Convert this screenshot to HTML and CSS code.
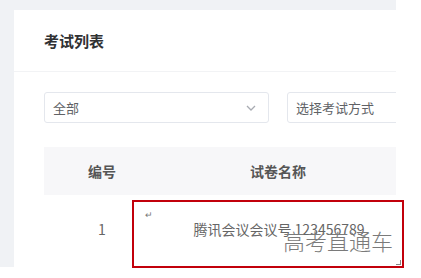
FILE: index.html
```html
<!DOCTYPE html>
<html lang="zh-CN">

<head>
  <meta charset="UTF-8">
  <meta name="viewport" content="width=device-width, initial-scale=1.0">
  <title>考试列表</title>
  <link rel="stylesheet" href="styles.css">
</head>

<body>
  <div class="frame">
    <div class="card">
      <div class="card-header">考试列表</div>
      <div class="card-body">
        <div class="filters">
          <div class="select select-status">
            <span>全部</span>
            <svg class="arrow" width="10" height="6" viewBox="0 0 10 6">
              <path d="M1 1 L5 5 L9 1" fill="none" stroke="#a8abb2" stroke-width="1.3" />
            </svg>
          </div>
          <div class="select select-type">
            <span>选择考试方式</span>
          </div>
        </div>

        <table class="exam-table">
          <thead>
            <tr>
              <th class="col-no">编号</th>
              <th class="col-name">试卷名称</th>
            </tr>
          </thead>
          <tbody>
            <tr>
              <td class="col-no">1</td>
              <td class="col-name">腾讯会议会议号 123456789</td>
            </tr>
          </tbody>
        </table>
      </div>
    </div>
  </div>

  <!-- annotation over the screenshot -->
  <div class="mark-box">
    <span class="return-mark">↵</span>
    <span class="corner"></span>
  </div>
  <div class="watermark">高考直通车</div>
</body>

</html>
```

FILE: styles.css
```css
body {
  margin: 0;
  background-color: #fff;
  font-family: "Noto Sans CJK SC", "Noto Sans", sans-serif;
  position: relative;
  width: 421px;
  height: 278px;
  overflow: hidden;
}

.frame {
  width: 396px;
  height: 267px;
  background-color: #f0f2f5;
  padding: 10px 0 0 14px;
  box-sizing: border-box;
  overflow: hidden;
}

.card {
  background-color: #fff;
  height: 100%;
}

.card-header {
  height: 61px;
  line-height: 62px;
  padding-left: 30px;
  font-size: 15px;
  font-weight: bold;
  color: #303133;
  border-bottom: 1px solid #f2f3f5;
}

.card-body {
  padding: 20px 0 0 30px;
}

.filters {
  display: flex;
  gap: 18px;
}

.select {
  height: 31px;
  box-sizing: border-box;
  border: 1px solid #e4e7ed;
  border-radius: 3px;
  display: flex;
  align-items: center;
  flex-shrink: 0;
  padding: 0 11px 0 8px;
  font-size: 13px;
  color: #606266;
}

.select-status {
  width: 225px;
  justify-content: space-between;
}

.select-type {
  width: 160px;
}

.arrow {
  margin-right: 1px;
}

.exam-table {
  margin-top: 24px;
  width: 352px;
  border-collapse: collapse;
  table-layout: fixed;
}

.exam-table th {
  height: 48px;
  background-color: #f7f7f9;
  font-size: 14px;
  font-weight: bold;
  color: #555;
  text-align: center;
  padding: 0;
}

.exam-table td {
  height: 68px;
  font-size: 14px;
  color: #666;
  text-align: center;
  padding: 0;
}

.col-no {
  width: 116px;
}

.exam-table td.col-name {
  padding-left: 2px;
}

.mark-box {
  position: absolute;
  left: 132px;
  top: 200px;
  width: 272px;
  height: 68px;
  box-sizing: border-box;
  border: 2px solid #c2000b;
}

.return-mark {
  position: absolute;
  left: 11px;
  top: 8px;
  font-size: 9px;
  line-height: 10px;
  color: #777;
}

.corner {
  position: absolute;
  right: 1px;
  bottom: 1px;
  width: 4px;
  height: 4px;
  border-right: 1px solid #888;
  border-bottom: 1px solid #888;
}

.watermark {
  position: absolute;
  left: 283px;
  top: 226px;
  font-size: 22px;
  line-height: 28px;
  font-weight: 300;
  color: #7a7a7a;
}
```
